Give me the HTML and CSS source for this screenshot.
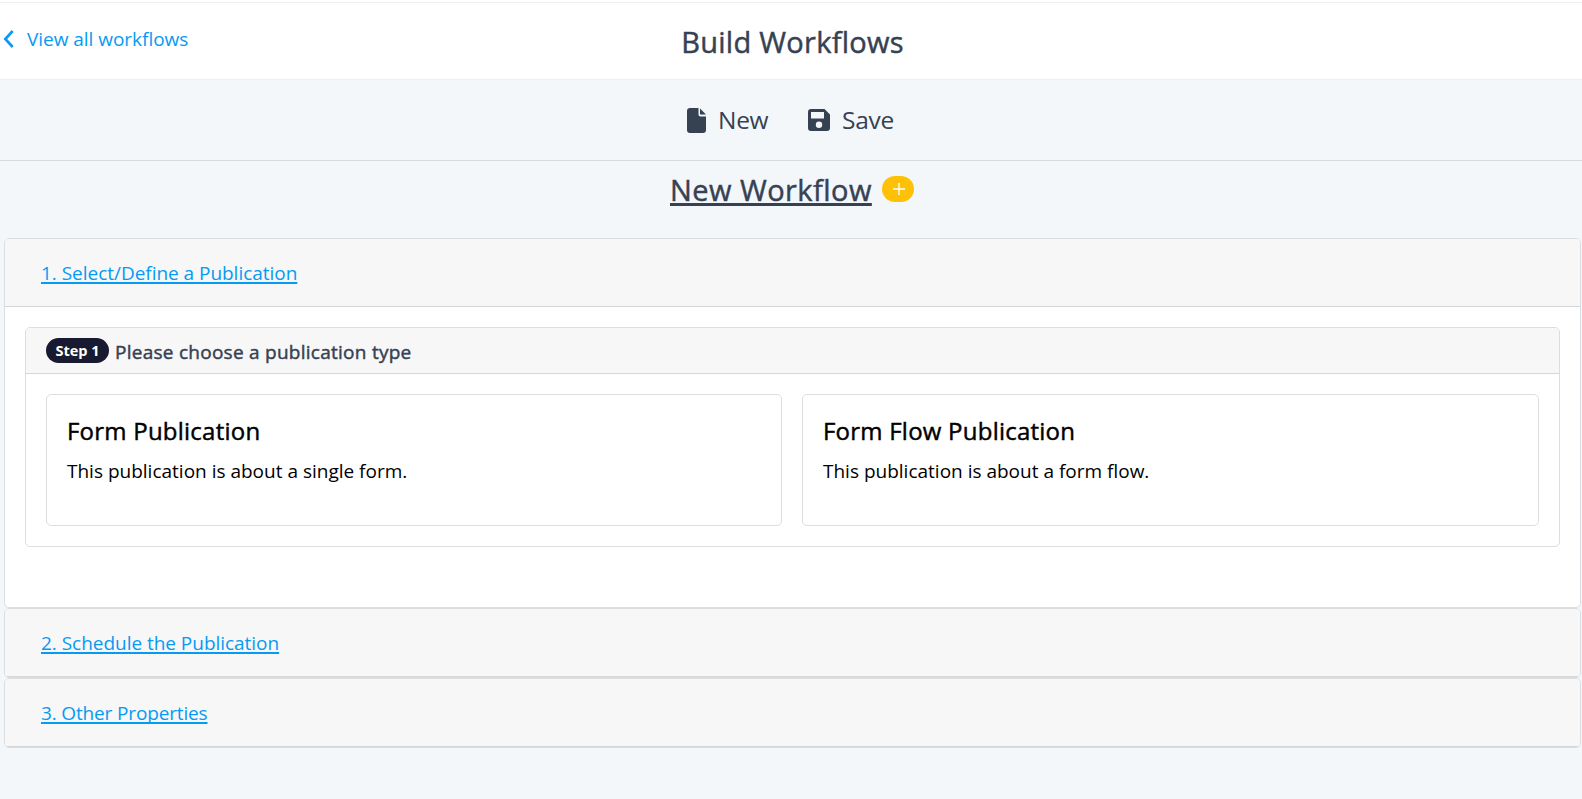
FILE: index.html
```html
<!DOCTYPE html>
<html lang="en">
<head>
<meta charset="utf-8">
<title>Build Workflows</title>
<link rel="stylesheet" href="styles.css">
</head>
<body>
<header class="topbar">
  <a class="back" href="#"><svg class="chevron" viewBox="0 0 10 18"><path d="M9.2 1 1.8 9l7.4 8"/></svg><span>View all workflows</span></a>
  <h1 class="page-title">Build Workflows</h1>
</header>
<nav class="toolbar">
  <button class="tool new"><svg class="file-icon" viewBox="0 0 19 25"><path d="M3 0h8.500v6.500a2 2 0 0 0 2 2H19V22a3 3 0 0 1-3 3H3a3 3 0 0 1-3-3V3a3 3 0 0 1 3-3z"/><path d="M13 .5 19 6.600h-6z"/></svg><span>New</span></button>
  <button class="tool save"><svg class="save-icon" viewBox="0 0 22 22"><path fill-rule="evenodd" d="M3 0h13.500L22 5.500V19a3 3 0 0 1-3 3H3a3 3 0 0 1-3-3V3a3 3 0 0 1 3-3zm0 3v6.500h13V3zm8 9.500a3.200 3.200 0 1 0 0 6.400 3.200 3.200 0 0 0 0-6.400z"/></svg><span>Save</span></button>
</nav>
<div class="workflow-name">
  <h2 class="name">New Workflow</h2>
  <button class="badge-add" aria-label="Add"><svg viewBox="0 0 12 12"><path d="M6 0v12M0 6h12"/></svg></button>
</div>
<main class="accordion">
  <section class="panel open">
    <div class="panel-head"><a class="link one" href="#">1. Select/Define a Publication</a></div>
    <div class="panel-body">
      <div class="step">
        <div class="step-head"><span class="pill">Step 1</span><span class="step-title">Please choose a publication type</span></div>
        <div class="choices">
          <article class="choice"><h3>Form Publication</h3><p>This publication is about a single form.</p></article>
          <article class="choice"><h3>Form Flow Publication</h3><p>This publication is about a form flow.</p></article>
        </div>
      </div>
    </div>
  </section>
  <section class="panel"><div class="panel-head"><a class="link" href="#">2. Schedule the Publication</a></div></section>
  <section class="panel"><div class="panel-head"><a class="link three" href="#">3. Other Properties</a></div></section>
</main>
</body>
</html>
```
FILE: styles.css
```css
* { box-sizing: border-box; }
body { margin: 0; padding-top: 2px; min-height: 799px; background: linear-gradient(#fff 0 2px, #f3f7fa 2px); color: #364152; font-family: "Open Sans", "Noto Sans", sans-serif; font-size: 19px; line-height: 30px; }
h1, h2, h3, p { margin: 0; font-weight: 400; white-space: nowrap; }
h1, h2, h3, .step-title { -webkit-text-stroke: .45px currentColor; }
a { color: #069af3; }
button { border: 0; padding: 0; background: none; color: inherit; font: inherit; }
.topbar { display: grid; grid-template-columns: 1fr auto 1fr; height: 78px; padding: 0 0 0 3px; background: #fff; border-top: 1px solid #eceeef; border-bottom: 1px solid #eceeef; }
.back { display: flex; align-items: center; gap: 13px; height: 30px; margin-top: 21px; text-decoration: none; letter-spacing: -.03px; }
.chevron { width: 11px; height: 18px; fill: none; stroke: #069af3; stroke-width: 2.600; }
.page-title { margin-top: 17px; font-size: 29px; line-height: 44px; letter-spacing: .27px; }
.toolbar { display: flex; height: 81px; padding-left: 687px; border-bottom: 1px solid #d5dadf; }
.tool { display: flex; align-items: center; height: 40px; margin-top: 20px; font-size: 24.500px; letter-spacing: -.3px; }
.tool svg { fill: #364152; flex: none; }
.file-icon { width: 19px; height: 25px; margin-right: 12px; }
.save-icon { width: 22px; height: 22px; margin-right: 12px; }
.new { width: 121px; }
.workflow-name { display: flex; height: 77px; padding: 7px 0 0 670px; }
.name { width: 202px; font-size: 29px; line-height: 44px; letter-spacing: .45px; text-decoration: underline; text-decoration-thickness: 3px; text-underline-offset: 2px; text-decoration-skip-ink: none; }
.badge-add { display: flex; align-items: center; justify-content: center; width: 32px; height: 26px; margin: 8px 0 0 10px; border-radius: 13px; background: #ffc107; }
.badge-add svg { width: 12px; height: 12px; margin-left: 1px; stroke: #fff; stroke-width: 1.400; }
.accordion { margin: 0 1px 0 4px; }
.panel { height: 70px; border: 1px solid #dcdddf; border-radius: 5px; background: #fff; overflow: hidden; }
.open { height: 370px; }
.panel-head { height: 68px; padding: 19px 36px; border-bottom: 1px solid #d5d6d7; background: #f7f7f7; }
.link { text-decoration-thickness: 2px; text-underline-offset: 2px; text-decoration-skip-ink: none; white-space: nowrap; letter-spacing: -.03px; }
.three { letter-spacing: -.15px; }
.panel-body { padding: 20px; }
.step { height: 220px; border: 1px solid #dcdddf; border-radius: 5px; overflow: hidden; }
.step-head { display: flex; align-items: center; gap: 6px; height: 46px; padding: 0 20px; border-bottom: 1px solid #d5d6d7; background: #f7f7f7; }
.pill { width: 63px; height: 25px; border-radius: 13px; background: #171a30; color: #fff; font-size: 14.500px; font-weight: 700; line-height: 25px; text-align: center; white-space: nowrap; }
.step-title { padding-top: 3px; white-space: nowrap; letter-spacing: .26px; }
.choices { display: grid; grid-template-columns: 736px 1fr; gap: 20px; padding: 20px; }
.choice { height: 132px; padding: 20px; border: 1px solid #dcdddf; border-radius: 5px; color: #000; }
.choice h3 { margin-bottom: 9px; font-size: 24px; line-height: 32px; letter-spacing: .23px; }
.choice p { line-height: 30px; }
```
